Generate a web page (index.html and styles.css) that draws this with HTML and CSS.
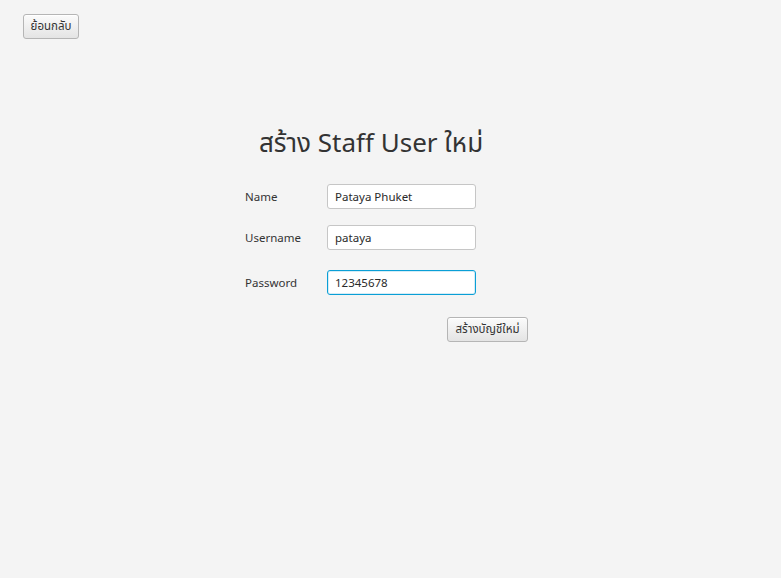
FILE: index.html
```html
<!DOCTYPE html>
<html lang="th">
<head>
<meta charset="utf-8">
<link rel="stylesheet" href="styles.css">
</head>
<body>
<div class="top">
  <button class="btn back">ย้อนกลับ</button>
</div>
<main class="form">
  <h1 class="title">สร้าง Staff User ใหม่</h1>
  <div class="row r1">
    <label class="lbl">Name</label>
    <div class="input">Pataya Phuket</div>
  </div>
  <div class="row r2">
    <label class="lbl">Username</label>
    <div class="input">pataya</div>
  </div>
  <div class="row r3">
    <label class="lbl">Password</label>
    <div class="input focus">12345678</div>
  </div>
  <div class="actions">
    <button class="btn create">สร้างบัญชีใหม่</button>
  </div>
</main>
</body>
</html>
```
FILE: styles.css
```css
html, body {
  margin: 0;
  padding: 0;
  background: #f4f4f4;
  width: 781px;
  height: 578px;
  overflow: hidden;
  font-family: "Noto Sans", "Noto Sans Thai", "DejaVu Sans", sans-serif;
  color: #333333;
  font-size: 11.5px;
}
.top {
  padding: 14px 0 0 23px;
  height: 25px;
}
.btn {
  font-family: inherit;
  font-size: 11.5px;
  color: #333;
  height: 25px;
  padding: 0;
  white-space: nowrap;
  border: 1px solid #b5b5b5;
  border-radius: 3px;
  background: linear-gradient(#fbfbfb, #e4e4e4);
  box-shadow: inset 0 1px 0 #ffffff;
  display: flex;
  align-items: center;
  justify-content: center;
}
.back { width: 56px; }
.form {
  margin-left: 245px;
  width: 283px;
  display: flex;
  flex-direction: column;
}
.title {
  margin: 82px 0 0 14px;
  height: 42px;
  font-weight: normal;
  font-size: 26px;
  line-height: 42px;
  color: #333;
  white-space: nowrap;
}
.row {
  display: flex;
  align-items: center;
  height: 25px;
}
.r1 { margin-top: 21px; }
.r2 { margin-top: 16px; }
.r3 { margin-top: 20px; }
.lbl { width: 82px; }
.input {
  box-sizing: border-box;
  width: 149px;
  height: 25px;
  border: 1px solid #c6c6c6;
  border-radius: 3px;
  background: #ffffff;
  padding: 0 7px;
  display: flex;
  align-items: center;
  color: #2a2a2a;
}
.input.focus {
  border-color: #0a9fd6;
  box-shadow: inset 0 0 0 1px #d5ecf6;
}
.actions {
  display: flex;
  justify-content: flex-end;
  margin-top: 22px;
}
.create { width: 81px; }
```
